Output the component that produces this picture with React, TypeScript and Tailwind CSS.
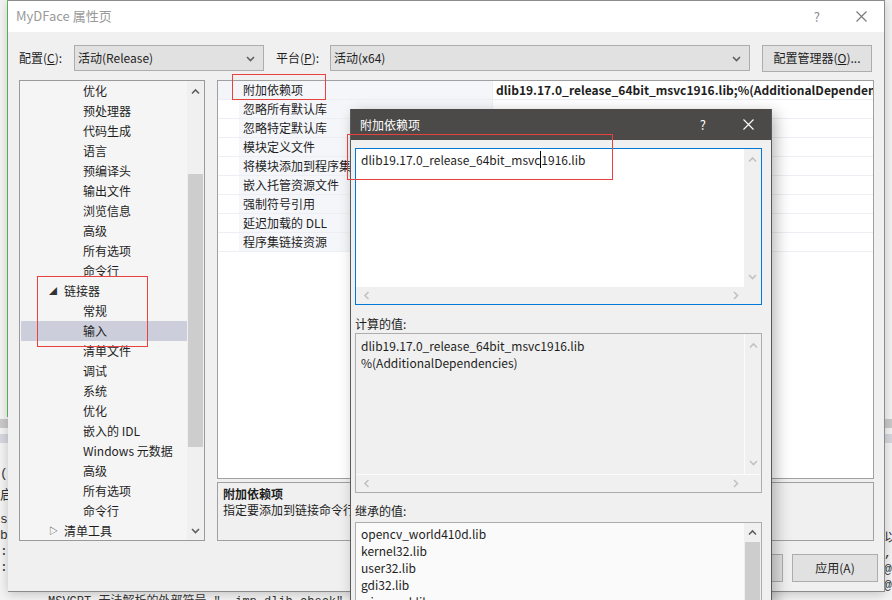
import React from "react";

type Dir = "up" | "down" | "left" | "right";

// thin chevron used for scrollbars and combo boxes
function Chevron({ dir, className }: { dir: Dir; className?: string }) {
  const paths: Record<Dir, string> = {
    up: "M1 5.5 L4.5 2 L8 5.5",
    down: "M1 2 L4.5 5.5 L8 2",
    left: "M5.5 1 L2 4.5 L5.5 8",
    right: "M2 1 L5.5 4.5 L2 8",
  };
  const vertical = dir === "up" || dir === "down";
  return (
    <svg
      width={vertical ? 9 : 7}
      height={vertical ? 7 : 9}
      viewBox={vertical ? "0 0 9 7" : "0 0 7 9"}
      className={className}
    >
      <path d={paths[dir]} fill="none" stroke="currentColor" strokeWidth="1.6" />
    </svg>
  );
}

function CloseIcon({ className }: { className?: string }) {
  return (
    <svg width="11" height="11" viewBox="0 0 11 11" className={className}>
      <path d="M0.5 0.5 L10.5 10.5 M10.5 0.5 L0.5 10.5" stroke="currentColor" strokeWidth="1.1" />
    </svg>
  );
}

const treeItems: { label: string; kind: "child" | "open" | "closed"; selected?: boolean }[] = [
  { label: "优化", kind: "child" },
  { label: "预处理器", kind: "child" },
  { label: "代码生成", kind: "child" },
  { label: "语言", kind: "child" },
  { label: "预编译头", kind: "child" },
  { label: "输出文件", kind: "child" },
  { label: "浏览信息", kind: "child" },
  { label: "高级", kind: "child" },
  { label: "所有选项", kind: "child" },
  { label: "命令行", kind: "child" },
  { label: "链接器", kind: "open" },
  { label: "常规", kind: "child" },
  { label: "输入", kind: "child", selected: true },
  { label: "清单文件", kind: "child" },
  { label: "调试", kind: "child" },
  { label: "系统", kind: "child" },
  { label: "优化", kind: "child" },
  { label: "嵌入的 IDL", kind: "child" },
  { label: "Windows 元数据", kind: "child" },
  { label: "高级", kind: "child" },
  { label: "所有选项", kind: "child" },
  { label: "命令行", kind: "child" },
  { label: "清单工具", kind: "closed" },
];

const properties = [
  "附加依赖项",
  "忽略所有默认库",
  "忽略特定默认库",
  "模块定义文件",
  "将模块添加到程序集",
  "嵌入托管资源文件",
  "强制符号引用",
  "延迟加载的 DLL",
  "程序集链接资源",
];

const inherited = ["opencv_world410d.lib", "kernel32.lib", "user32.lib", "gdi32.lib", "winspool.lib"];

function Combo({ text, width }: { text: string; width: string }) {
  return (
    <div
      className={`${width} h-[26px] bg-[#e1e1e1] border border-[#adadad] flex items-center justify-between pl-[3px] pr-[8px]`}
    >
      <span>{text}</span>
      <Chevron dir="down" className="text-[#606060]" />
    </div>
  );
}

function Tree() {
  return (
    <div className="w-[186px] h-[461px] border border-[#9a9a9a] bg-[#f5f5f5] flex">
      <div className="flex-1 overflow-hidden">
        {treeItems.map((item, i) => (
          <div
            key={i}
            className={`h-[20px] flex items-center ${item.selected ? "bg-[#cccedb] ml-[1px]" : ""}`}
          >
            {item.kind === "child" && (
              <span className={item.selected ? "pl-[62px]" : "pl-[63px]"}>{item.label}</span>
            )}
            {item.kind === "open" && (
              <>
                <span className="pl-[29px] w-[44px] text-[8px] text-[#333]">◢</span>
                <span>{item.label}</span>
              </>
            )}
            {item.kind === "closed" && (
              <>
                <span className="pl-[29px] w-[44px] text-[9px] text-[#444]">▷</span>
                <span>{item.label}</span>
              </>
            )}
          </div>
        ))}
      </div>
      {/* scrollbar */}
      <div className="w-[17px] bg-[#f0f0f0] flex flex-col items-center">
        <div className="h-[20px] flex items-center justify-center">
          <Chevron dir="up" className="text-[#606060]" />
        </div>
        <div className="h-[73px]" />
        <div className="w-[15px] h-[273px] bg-[#cdcdcd]" />
        <div className="flex-1" />
        <div className="h-[20px] flex items-center justify-center">
          <Chevron dir="down" className="text-[#606060]" />
        </div>
      </div>
    </div>
  );
}

function PropertyGrid() {
  return (
    <div className="h-[399px] border border-[#a0a0a0] bg-white overflow-hidden">
      {properties.map((name, i) => (
        <div
          key={name}
          className={`h-[19px] flex border-b border-[#eeeff4] ${i === 0 ? "bg-[#f3f5f9]" : ""}`}
        >
          <div className="w-[21px]" />
          <div className="w-[253px] bg-[#f5f6fa] flex items-center pl-[4px] whitespace-nowrap overflow-hidden">
            {name}
          </div>
          <div className="flex-1 bg-white flex items-center pl-[3px] border-l border-[#eeeff4] whitespace-nowrap overflow-hidden">
            {i === 0 && (
              <span className="font-bold">dlib19.17.0_release_64bit_msvc1916.lib;%(AdditionalDependencies)</span>
            )}
          </div>
        </div>
      ))}
    </div>
  );
}

function DependencyDialog() {
  return (
    <div className="absolute left-[350px] top-[109px] w-[422px] h-[520px] bg-[#f0f0f0] border-x border-[#5a5a5a] shadow-[4px_4px_14px_rgba(0,0,0,0.28)]">
      <div className="h-[31px] bg-[#4b4a48] flex items-center pl-[9px] pr-[17px] text-white">
        <span className="flex-1">附加依赖项</span>
        <span className="text-[13px] mr-[37px]">?</span>
        <CloseIcon className="text-white" />
      </div>
      <div className="pl-[4px] pr-[9px]">
        {/* editable list */}
        <div className="mt-[8px] h-[157px] border border-[#0078d7] flex flex-col">
          <div className="flex flex-1">
            <div className="flex-1 bg-white pl-[5px] pt-[2px]">
              <span>dlib19.17.0_release_64bit_msvc</span>
              <span className="border-l border-black">1916.lib</span>
            </div>
            <div className="w-[17px] bg-[#f0f0f0] flex flex-col items-center justify-between py-[7px]">
              <Chevron dir="up" className="text-[#c2c2c2]" />
              <Chevron dir="down" className="text-[#c2c2c2]" />
            </div>
          </div>
          <div className="h-[17px] bg-[#f0f0f0] flex items-center justify-between pl-[7px] pr-[22px]">
            <Chevron dir="left" className="text-[#c2c2c2]" />
            <Chevron dir="right" className="text-[#c2c2c2]" />
          </div>
        </div>

        <div className="mt-[9px] h-[19px] leading-[19px]">计算的值:</div>
        <div className="h-[160px] border border-[#adadad] flex flex-col">
          <div className="flex flex-1">
            <div className="flex-1 pl-[5px] pt-[3px] leading-[17px]">
              <div>dlib19.17.0_release_64bit_msvc1916.lib</div>
              <div>%(AdditionalDependencies)</div>
            </div>
            <div className="w-[17px] border-l border-[#fbfbfb] flex flex-col items-center justify-between py-[8px]">
              <Chevron dir="up" className="text-[#c2c2c2]" />
              <Chevron dir="down" className="text-[#c2c2c2]" />
            </div>
          </div>
          <div className="h-[18px] border-t border-[#fbfbfb] flex items-center justify-between pl-[7px] pr-[22px]">
            <Chevron dir="left" className="text-[#c2c2c2]" />
            <Chevron dir="right" className="text-[#c2c2c2]" />
          </div>
        </div>

        <div className="mt-[8px] h-[19px] leading-[19px]">继承的值:</div>
        <div className="mt-[2px] h-[120px] border border-[#adadad] bg-[#fafafa] flex">
          <div className="flex-1 pl-[5px] pt-[2px] leading-[17px]">
            {inherited.map((lib) => (
              <div key={lib}>{lib}</div>
            ))}
          </div>
          <div className="w-[17px] bg-[#f0f0f0] flex flex-col items-center">
            <div className="h-[19px] flex items-center">
              <Chevron dir="up" className="text-[#606060]" />
            </div>
            <div className="w-[15px] flex-1 bg-[#cdcdcd]" />
          </div>
        </div>
      </div>
    </div>
  );
}

export default function App() {
  return (
    <div className="relative w-[892px] h-[600px] overflow-hidden bg-[#f3f3f3] text-[12px] text-[#1e1e1e] font-['Microsoft_YaHei_UI','Noto_Sans_CJK_SC','Noto_Sans',sans-serif]">
      {/* editor behind the dialog */}
      <div className="absolute left-[7px] top-0 w-[2px] h-[417px] bg-[#5fbf5a]" />
      <div className="absolute left-0 top-[419px] w-[892px] h-[9px] bg-[#c9c9c9]" />
      <div className="absolute left-0 top-[434px] w-[892px] h-[9px] bg-[#d6d6de]" />
      <div className="absolute left-0 top-[466px] text-[13px] leading-[16px] text-[#333] font-['Liberation_Mono','Noto_Sans_CJK_SC',monospace]">
        <div>(S</div>
        <div className="mt-[6px]">启</div>
        <div className="mt-[8px]">s2</div>
        <div>b-</div>
        <div>:</div>
        <div>:</div>
      </div>
      <div className="absolute left-[884px] top-[530px] text-[13px] leading-[16px] text-[#333] font-['Liberation_Mono','Noto_Sans_CJK_SC',monospace]">
        <div>以</div>
        <div>,</div>
        <div>@</div>
        <div>@</div>
      </div>
      <div className="absolute left-[48px] top-[595px] text-[12px] leading-[14px] text-[#333] whitespace-nowrap font-['Liberation_Mono','Noto_Sans_CJK_SC',monospace]">
        MSVCRT    无法解析的外部符号 "__imp_dlib_check",     Lnk_thdll_c
      </div>

      {/* property pages window */}
      <div className="absolute left-[8px] top-0 w-[877px] h-[592px] bg-[#f0f0f0] border-t border-r border-b border-[#8c8c8c] flex flex-col shadow-[0_2px_10px_rgba(0,0,0,0.2)]">
        <div className="h-[31px] bg-white flex items-center pl-[8px] pr-[17px] text-[#999]">
          <span className="flex-1 text-[13px] -mt-[1px]">MyDFace 属性页</span>
          <span className="text-[13px] mr-[36px] text-[#888]">?</span>
          <CloseIcon className="text-[#777]" />
        </div>

        <div className="mt-[13px] h-[26px] flex items-center pl-[11px]">
          <span className="w-[55px]">
            配置(<u>C</u>):
          </span>
          <Combo text="活动(Release)" width="w-[190px]" />
          <span className="ml-[12px] w-[54px]">
            平台(<u>P</u>):
          </span>
          <Combo text="活动(x64)" width="w-[420px]" />
          <button className="ml-[12px] w-[110px] h-[27px] bg-[#e1e1e1] border border-[#adadad]">
            配置管理器(<u>O</u>)...
          </button>
        </div>

        <div className="mt-[9px] flex pl-[11px] gap-[12px]">
          <Tree />
          <div className="w-[657px] flex flex-col">
            <PropertyGrid />
            <div className="mt-[3px] h-[59px] border border-[#a0a0a0] pl-[5px] pt-[3px] leading-[16px]">
              <div className="font-bold">附加依赖项</div>
              <div>指定要添加到链接命令行的附加项。[例如 kernel32.lib]</div>
            </div>
          </div>
        </div>

        <div className="mt-[13px] flex justify-end gap-[9px] pr-[6px]">
          <button className="w-[86px] h-[28px] bg-[#e1e1e1] border border-[#adadad]">确定</button>
          <button className="w-[86px] h-[28px] bg-[#e1e1e1] border border-[#adadad]">取消</button>
          <button className="w-[86px] h-[28px] bg-[#e1e1e1] border border-[#adadad]">应用(A)</button>
        </div>
      </div>

      <DependencyDialog />

      {/* red annotation boxes */}
      <div className="absolute left-[232px] top-[74px] w-[94px] h-[26px] border border-[#e8413e]" />
      <div className="absolute left-[37px] top-[276px] w-[111px] h-[71px] border border-[#e8413e]" />
      <div className="absolute left-[347px] top-[134px] w-[266px] h-[46px] border border-[#e8413e]" />
    </div>
  );
}
